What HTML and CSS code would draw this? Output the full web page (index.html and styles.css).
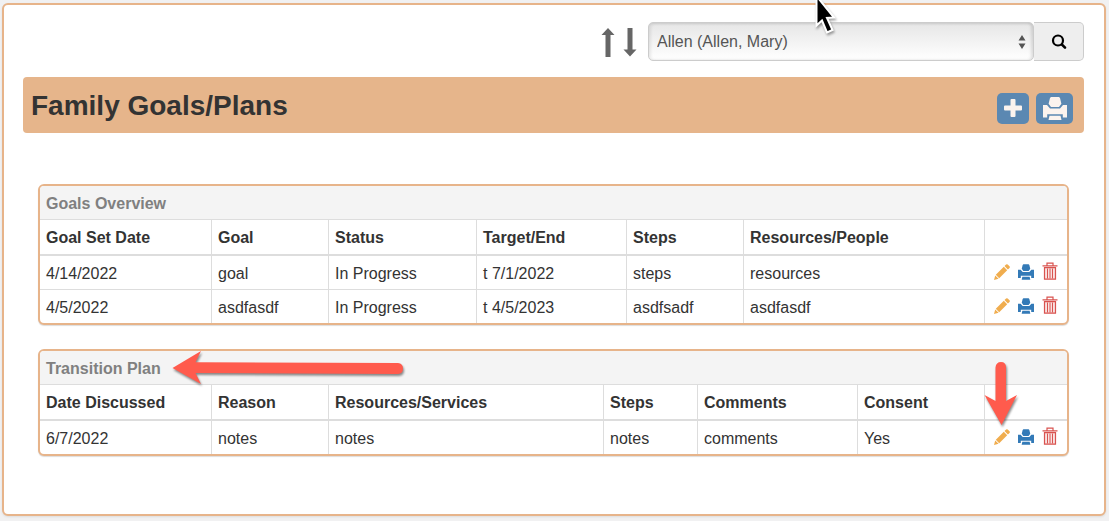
FILE: index.html
```html
<!DOCTYPE html>
<html lang="en">
<head>
<meta charset="utf-8">
<title>Family Goals/Plans</title>
<link rel="stylesheet" href="styles.css">
</head>
<body>
<svg class="sprite" aria-hidden="true">
  <symbol id="pencil" viewBox="0 0 16 16"><path fill="#f0ad4e" d="M0 16l1.200-4.600 3.400 3.400zM1.800 10.800l8-8 3.400 3.400-8 8zM10.500 2.100l1.600-1.600q.8-.7 1.600 0l1.800 1.800q.8.800 0 1.600l-1.600 1.600z"/></symbol>
  <symbol id="printer" viewBox="0 0 24 23"><path fill="currentColor" d="M8 0h8l1 1 1.400 5.700L16 10H8L5.600 6.700 7 1zM0 8h4l3 3.600h10L20 8h4v12.500h-4.200v-3.300H4.200v3.300H0zM6.500 18.800h11l1 4.200h-13z"/></symbol>
  <symbol id="trash" viewBox="0 0 16 18"><g fill="none" stroke="#d9534f"><path stroke-width="1.200" d="M0.500 3.800h15M5 3.500V1.200h6v2.300"/><path fill="#f9e1e0" stroke-width="1.200" d="M2.500 5.600h11v11.600h-11z"/><path stroke-width="1" d="M5.500 6.500v10M8 6.500v10M10.500 6.500v10"/></g></symbol>
</svg>
<main class="page">
  <form class="toolbar">
    <button type="button" class="sort" aria-label="Previous family"><svg width="14" height="30" viewBox="0 0 14 30"><path fill="#666" d="M7 0l6.500 7H9.500v22h-5V7H.5z"/></svg></button>
    <button type="button" class="sort" aria-label="Next family"><svg width="14" height="30" viewBox="0 0 14 30"><path fill="#666" d="M7 28.500l6.500-7h-4V0h-5v21.500h-4z"/></svg></button>
    <div class="picker">
      <select class="family" aria-label="Family"><option>Allen (Allen, Mary)</option></select>
      <svg class="caret" width="8" height="14" viewBox="0 0 8 14"><path fill="#555" d="M4 0l3.500 5.500h-7zM4 14l3.500-5.500h-7z"/></svg>
    </div>
    <button type="button" class="search" aria-label="Search"><svg width="16" height="16" viewBox="0 0 16 16"><g fill="none" stroke="#000"><circle cx="7" cy="6.500" r="5" stroke-width="2.200"/><path stroke-width="2.600" stroke-linecap="round" d="M11 10.700l3 3"/></g></svg></button>
  </form>
  <header class="banner">
    <h1 class="title">Family Goals/Plans</h1>
    <div class="tools">
      <button type="button" class="tool" aria-label="Add"><svg width="18" height="18" viewBox="0 0 18 18"><path fill="#fbf3ee" d="M7.500 0h3q1 0 1 1v5.500H17q1 0 1 1v3q0 1-1 1h-5.500V17q0 1-1 1h-3q-1 0-1-1v-5.500H1q-1 0-1-1v-3q0-1 1-1h5.500V1q0-1 1-1z"/></svg></button>
      <button type="button" class="tool tool-wide" aria-label="Print"><svg width="24" height="23"><use href="#printer"/></svg></button>
    </div>
  </header>
  <section class="card">
    <h2 class="card-title" id="goals">Goals Overview</h2>
    <table class="grid" aria-labelledby="goals">
      <colgroup><col class="w172"><col class="w117"><col class="w148"><col class="w150"><col class="w117"><col><col class="w82"></colgroup>
      <thead><tr><th>Goal Set Date</th><th>Goal</th><th>Status</th><th>Target/End</th><th>Steps</th><th>Resources/People</th><th></th></tr></thead>
      <tbody>
        <tr><td>4/14/2022</td><td>goal</td><td>In Progress</td><td>t 7/1/2022</td><td>steps</td><td>resources</td><td><div class="actions"><button type="button" class="act" aria-label="Edit"><svg width="16" height="16"><use href="#pencil"/></svg></button><button type="button" class="act" aria-label="Print"><svg width="16" height="16"><use href="#printer"/></svg></button><button type="button" class="act" aria-label="Delete"><svg width="16" height="18"><use href="#trash"/></svg></button></div></td></tr>
        <tr><td>4/5/2022</td><td>asdfasdf</td><td>In Progress</td><td>t 4/5/2023</td><td>asdfsadf</td><td>asdfasdf</td><td><div class="actions"><button type="button" class="act" aria-label="Edit"><svg width="16" height="16"><use href="#pencil"/></svg></button><button type="button" class="act" aria-label="Print"><svg width="16" height="16"><use href="#printer"/></svg></button><button type="button" class="act" aria-label="Delete"><svg width="16" height="18"><use href="#trash"/></svg></button></div></td></tr>
      </tbody>
    </table>
  </section>
  <section class="card">
    <h2 class="card-title" id="plan">Transition Plan</h2>
    <table class="grid" aria-labelledby="plan">
      <colgroup><col class="w172"><col class="w117"><col><col class="w94"><col class="w160"><col class="w127"><col class="w82"></colgroup>
      <thead><tr><th>Date Discussed</th><th>Reason</th><th>Resources/Services</th><th>Steps</th><th>Comments</th><th>Consent</th><th></th></tr></thead>
      <tbody>
        <tr><td>6/7/2022</td><td>notes</td><td>notes</td><td>notes</td><td>comments</td><td>Yes</td><td><div class="actions"><button type="button" class="act" aria-label="Edit"><svg width="16" height="16"><use href="#pencil"/></svg></button><button type="button" class="act" aria-label="Print"><svg width="16" height="16"><use href="#printer"/></svg></button><button type="button" class="act" aria-label="Delete"><svg width="16" height="18"><use href="#trash"/></svg></button></div></td></tr>
      </tbody>
    </table>
    <svg class="mark mark-left" width="232" height="36" viewBox="0 0 232 36"><path fill="#ff5b4d" d="M0.500 17L29 0l-5.500 11.300L226 12q5 .5 5 5.500t-5 5.500L23.500 22 29 33z"/></svg>
    <svg class="mark mark-down" width="34" height="64" viewBox="0 0 34 64"><path fill="#ff5b4d" d="M17.500 63L0.500 33l11 6V5.500Q12 0 17 0t5 5.500V39l11-6z"/></svg>
  </section>
  <svg class="cursor" width="24" height="40" viewBox="0 0 24 40"><path fill="#000" stroke="#fff" stroke-width="2" d="M2.500-4L20 17.500l-7 .5 5.500 12-5.500 2.500-5-12-5.500 5z"/></svg>
</main>
</body>
</html>
```

FILE: styles.css
```css
* { box-sizing: border-box; }
body {
  margin: 0;
  padding: 3px 3px 5px 2px;
  background: #f1f1f2;
  color: #333;
  font: 16px/22px "Liberation Sans", Arial, sans-serif;
}
button { padding: 0; border: 0; background: none; }
svg { display: block; }
.sprite { position: absolute; width: 0; height: 0; }
.page {
  padding: 17px 20px 58px 19px;
  border: 2px solid #e7b48a;
  border-radius: 6px;
  background: #fff;
  box-shadow: 0 1px 2px #ddd;
}
.toolbar { display: flex; align-items: center; justify-content: flex-end; }
.sort { margin: 3px 8px 0 0; }
.sort + .picker { margin-left: 3px; }
.picker { position: relative; width: 386px; }
.family {
  appearance: none;
  display: block;
  width: 100%;
  height: 39px;
  padding: 0 24px 0 8px;
  border: 1px solid #ccc;
  border-radius: 5px;
  background: linear-gradient(#e6e6e6, #fff);
  box-shadow: inset 2px 1px 3px rgba(0, 0, 0, .08), inset -2px 0 3px rgba(0, 0, 0, .12);
  color: #555;
  font: inherit;
}
.caret { position: absolute; right: 8px; top: 13px; pointer-events: none; }
.search {
  display: flex;
  align-items: center;
  justify-content: center;
  width: 50px;
  height: 39px;
  border: 1px solid #ccc;
  border-left: 0;
  border-radius: 0 5px 5px 0;
  background: #eee;
}
.banner {
  display: flex;
  align-items: center;
  justify-content: space-between;
  height: 56px;
  margin: 16px 0 51px;
  padding: 0 11px 0 8px;
  border-radius: 4px;
  background: #e6b58b;
}
.title { margin: 0; padding-top: 2px; font-size: 28px; line-height: 32px; }
.tools { display: flex; gap: 7px; padding-top: 6px; }
.tool {
  display: flex;
  align-items: center;
  justify-content: center;
  width: 32px;
  height: 31px;
  border-radius: 5px;
  background: #5b88b2;
  color: #fbf3ee;
}
.tool-wide { width: 37px; }
.card {
  position: relative;
  margin: 0 15px 24px;
  border: 2px solid #e7b48a;
  border-radius: 6px;
  background: #fff;
  box-shadow: 0 1px 1px #ddd;
}
.card:last-of-type { margin-bottom: 0; }
.card-title {
  margin: 0;
  padding: 7px 6px 4px;
  border-bottom: 1px solid #ddd;
  border-radius: 4px 4px 0 0;
  background: #f4f4f4;
  color: #808080;
  font-size: 16px;
  line-height: 22px;
}
.grid { width: 100%; table-layout: fixed; border-spacing: 0; }
.grid th, .grid td { padding: 7px 6px 5px; border-right: 1px solid #ddd; text-align: left; }
.grid th { border-bottom: 2px solid #ddd; }
.grid td { padding-bottom: 4px; }
.grid tr + tr td { border-top: 1px solid #ddd; }
.grid tr :last-child { border-right: 0; }
.w82 { width: 82px; }
.w94 { width: 94px; }
.w117 { width: 117px; }
.w127 { width: 127px; }
.w148 { width: 148px; }
.w150 { width: 150px; }
.w160 { width: 160px; }
.w172 { width: 172px; }
.actions { display: flex; align-items: flex-end; gap: 8px; height: 22px; padding: 0 0 5px 3px; }
.act { color: #337ab7; }
.mark { position: absolute; filter: drop-shadow(1px 2px 1px rgba(0, 0, 0, .45)); }
.mark-left { left: 132px; top: 0; }
.mark-down { right: 49px; top: 11px; }
.cursor { position: absolute; left: 814px; top: 0; filter: drop-shadow(1px 2px 1px rgba(0, 0, 0, .35)); }
```
